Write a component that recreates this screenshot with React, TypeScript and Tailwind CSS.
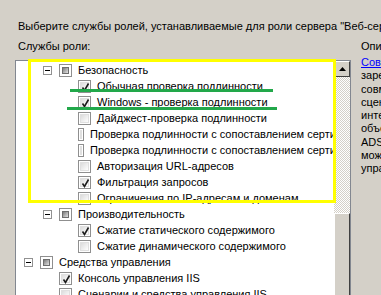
import React from "react";

type Row = { l: 0 | 1 | 2; t: string; parent?: boolean; c?: boolean };

const rows: Row[] = [
  { l: 1, t: "Безопасность", parent: true },
  { l: 2, t: "Обычная проверка подлинности", c: true },
  { l: 2, t: "Windows - проверка подлинности", c: true },
  { l: 2, t: "Дайджест-проверка подлинности" },
  { l: 2, t: "Проверка подлинности с сопоставлением сертификата клиента" },
  { l: 2, t: "Проверка подлинности с сопоставлением сертификата клиента IIS" },
  { l: 2, t: "Авторизация URL-адресов" },
  { l: 2, t: "Фильтрация запросов", c: true },
  { l: 2, t: "Ограничения по IP-адресам и доменам" },
  { l: 1, t: "Производительность", parent: true },
  { l: 2, t: "Сжатие статического содержимого", c: true },
  { l: 2, t: "Сжатие динамического содержимого" },
  { l: 0, t: "Средства управления", parent: true },
  { l: 1, t: "Консоль управления IIS", c: true },
  { l: 1, t: "Сценарии и средства управления IIS" },
];

const indent: Record<number, string> = {
  0: "pl-[8px]",
  1: "pl-[27px]",
  2: "pl-[46px]",
};

function Expander() {
  return (
    <div className="w-[9px] h-[9px] border border-[#919191] bg-white flex items-center justify-center">
      <div className="w-[5px] h-[1px] bg-black" />
    </div>
  );
}

function CheckBox({ checked }: { checked?: boolean }) {
  return (
    <div className="w-[13px] h-[13px] border border-[#8f8f8f] bg-white p-[1px]">
      <div className="w-full h-full border border-[#e0e0e0] bg-[linear-gradient(135deg,#dcdcdc,#ffffff)] relative">
        {checked && (
          <svg className="absolute -left-[2px] -top-[2px]" width="13" height="13" viewBox="0 0 13 13">
            <path d="M3.5 6.5 L5.5 9.5 L9.5 2.5" fill="none" stroke="#1c1c1c" strokeWidth="1.6" />
          </svg>
        )}
      </div>
    </div>
  );
}

function ParentBox() {
  return (
    <div className="w-[13px] h-[13px] border border-[#8f8f8f] bg-white p-[2px]">
      <div className="w-full h-full border border-[#6e6e6e] bg-[linear-gradient(135deg,#7a7a7a,#e4e4e4)]" />
    </div>
  );
}

const descLines = [
  "Совместная",
  "зарегистр",
  "совместно",
  "сценарии",
  "интерфейс",
  "объекты",
  "ADSI",
  "может",
  "управлять",
];

export default function App() {
  return (
    <div className="w-[381px] h-[295px] bg-[#d4d0c8] relative overflow-hidden font-['Liberation_Sans',Arial,sans-serif] text-[11px] text-black">
      <div className="pt-[18px] pl-[18px] leading-[16px] whitespace-nowrap">
        Выберите службы ролей, устанавливаемые для роли сервера "Веб-сервер (IIS)":
      </div>
      <div className="flex mt-[4px] pl-[15px]">
        <div className="flex flex-col w-[336px] shrink-0">
          <div className="pl-[3px] leading-[16px] h-[16px]">Службы роли:</div>
          <div className="mt-[6px] h-[240px] border border-[#828790] bg-white flex">
            <div className="flex-1 overflow-hidden pt-[1px]">
              {rows.map((r, i) => (
                <div key={i} className={`h-[16px] flex items-center whitespace-nowrap ${indent[r.l]}`}>
                  <div className="w-[16px] shrink-0 flex">{r.parent && <Expander />}</div>
                  {r.parent ? <ParentBox /> : <CheckBox checked={r.c} />}
                  <span className="ml-[6px] leading-[16px]">{r.t}</span>
                </div>
              ))}
            </div>
            <div className="w-[16px] shrink-0 flex flex-col bg-[repeating-conic-gradient(#d4d0c8_0%_25%,#ffffff_0%_50%)] bg-[length:2px_2px]">
              <div className="h-[16px] bg-[#d4d0c8] border-t border-l border-white border-r border-b border-r-[#404040] border-b-[#404040] flex items-center justify-center">
                <svg width="7" height="4" viewBox="0 0 7 4">
                  <path d="M3.5 0 L7 4 L0 4 Z" fill="#000" />
                </svg>
              </div>
              <div className="h-[136px]" />
              <div className="flex-1 bg-[#d4d0c8] border-t border-l border-white border-r border-r-[#404040]" />
            </div>
          </div>
        </div>
        <div className="ml-[10px] flex flex-col whitespace-nowrap">
          <div className="leading-[16px] h-[16px]">Описание:</div>
          <div className="mt-[2px] leading-[13.25px] pt-[0px]">
            <div className="text-[#0000ff] underline">{descLines[0]}</div>
            {descLines.slice(1).map((d, i) => (
              <div key={i}>{d}</div>
            ))}
          </div>
        </div>
      </div>
      <div className="absolute left-[28px] top-[59px] w-[308px] h-[144px] border-[3px] border-[#ffff00]" />
      <div className="absolute left-[70px] top-[89px] w-[203px] h-[3px] bg-[#22a84a]" />
      <div className="absolute left-[67px] top-[107px] w-[210px] h-[3px] bg-[#22a84a]" />
    </div>
  );
}
